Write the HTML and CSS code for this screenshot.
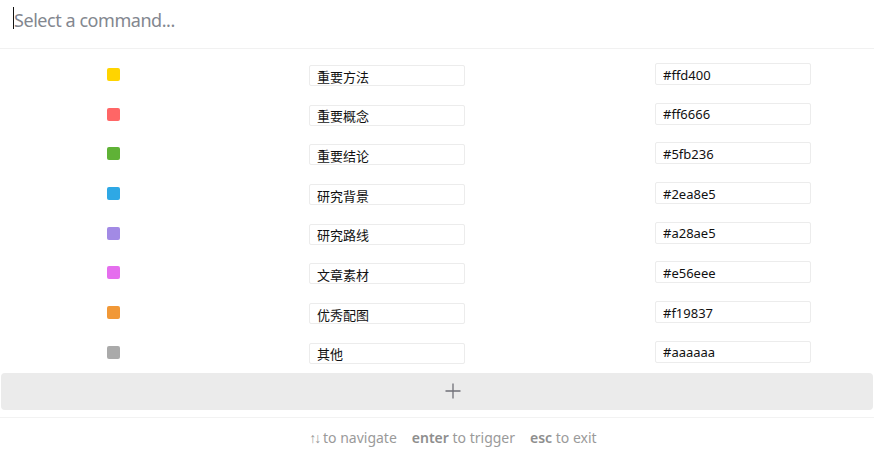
FILE: index.html
```html
<!DOCTYPE html>
<html>
<head>
<meta charset="utf-8">
<link rel="stylesheet" href="styles.css">
</head>
<body>
<div class="palette">
  <div class="search">
    <span class="caret"></span>
    <input class="search-input" type="text" placeholder="Select a command...">
  </div>
  <div class="list">
    <div class="row">
      <span class="swatch" style="background:#ffd400"></span>
      <input class="name" type="text" value="重要方法">
      <input class="hex" type="text" value="#ffd400">
    </div>
    <div class="row">
      <span class="swatch" style="background:#ff6666"></span>
      <input class="name" type="text" value="重要概念">
      <input class="hex" type="text" value="#ff6666">
    </div>
    <div class="row">
      <span class="swatch" style="background:#5fb236"></span>
      <input class="name" type="text" value="重要结论">
      <input class="hex" type="text" value="#5fb236">
    </div>
    <div class="row">
      <span class="swatch" style="background:#2ea8e5"></span>
      <input class="name" type="text" value="研究背景">
      <input class="hex" type="text" value="#2ea8e5">
    </div>
    <div class="row">
      <span class="swatch" style="background:#a28ae5"></span>
      <input class="name" type="text" value="研究路线">
      <input class="hex" type="text" value="#a28ae5">
    </div>
    <div class="row">
      <span class="swatch" style="background:#e56eee"></span>
      <input class="name" type="text" value="文章素材">
      <input class="hex" type="text" value="#e56eee">
    </div>
    <div class="row">
      <span class="swatch" style="background:#f19837"></span>
      <input class="name" type="text" value="优秀配图">
      <input class="hex" type="text" value="#f19837">
    </div>
    <div class="row">
      <span class="swatch" style="background:#aaaaaa"></span>
      <input class="name" type="text" value="其他">
      <input class="hex" type="text" value="#aaaaaa">
    </div>
  </div>
  <button class="add" type="button" aria-label="Add">
    <svg width="16" height="16" viewBox="0 0 16 16"><path d="M8 0.5V15.5M0.5 8H15.5" stroke="#707078" stroke-width="1.3" fill="none"/></svg>
  </button>
  <div class="footer">
    <span><span class="arrows">↑↓</span> to navigate</span>
    <span><b>enter</b> to trigger</span>
    <span><b>esc</b> to exit</span>
  </div>
</div>
</body>
</html>
```

FILE: styles.css
```css
html, body {
  margin: 0;
  padding: 0;
  background: #fff;
}

body {
  font-family: "Noto Sans", "Noto Sans CJK SC", sans-serif;
  width: 874px;
  height: 452px;
  overflow: hidden;
}

.palette {
  display: flex;
  flex-direction: column;
}

.search {
  position: relative;
  height: 48px;
  border-bottom: 1px solid #f1f1f1;
  display: flex;
  align-items: flex-start;
}

.caret {
  position: absolute;
  left: 13px;
  top: 7px;
  width: 1px;
  height: 22px;
  background: #111;
}

.search-input {
  border: none;
  outline: none;
  margin: 7px 0 0 14px;
  padding: 0;
  height: 25px;
  width: 600px;
  font-family: "Noto Sans", sans-serif;
  font-size: 18px;
  letter-spacing: -0.45px;
  color: #333;
  background: transparent;
}

.search-input::placeholder {
  color: #83878f;
}

.list {
  padding-top: 6px;
}

.row {
  height: 39.7px;
  display: grid;
  grid-template-columns: 227px 320px 1fr;
  align-items: start;
}

.swatch {
  justify-self: center;
  width: 13px;
  height: 13px;
  margin-top: 13px;
  border-radius: 2px;
}

.name, .hex {
  box-sizing: border-box;
  width: 156px;
  border: 1px solid #ececec;
  border-radius: 2px;
  padding: 0 0 0 7px;
  outline: none;
  font-family: "Noto Sans CJK SC", "Noto Sans", sans-serif;
  font-size: 13px;
  color: #111;
  background: #fff;
}

.name {
  justify-self: center;
  height: 21px;
  margin-top: 10px;
  padding-top: 1px;
  line-height: 19px;
}

.hex {
  justify-self: start;
  margin-left: 108px;
  height: 22px;
  margin-top: 8px;
  padding-top: 1px;
  line-height: 20px;
  font-family: "Noto Sans", sans-serif;
}

.add {
  margin: 0 1px;
  height: 37px;
  border: none;
  border-radius: 4px;
  background: #ebebeb;
  display: flex;
  align-items: center;
  justify-content: center;
  padding: 0 0 0 32px;
  cursor: pointer;
}

.add svg {
  display: block;
}

.footer {
  margin-top: 7px;
  border-top: 1px solid #f2f2f2;
  height: 34px;
  box-sizing: border-box;
  padding: 6px 0 0 32px;
  display: flex;
  justify-content: center;
  align-items: center;
  gap: 15px;
  font-family: "Noto Sans", sans-serif;
  font-size: 14px;
  color: #9a9a9a;
}

.footer b {
  font-weight: 600;
  color: #8e8e8e;
}

.arrows {
  letter-spacing: -2px;
}
```
